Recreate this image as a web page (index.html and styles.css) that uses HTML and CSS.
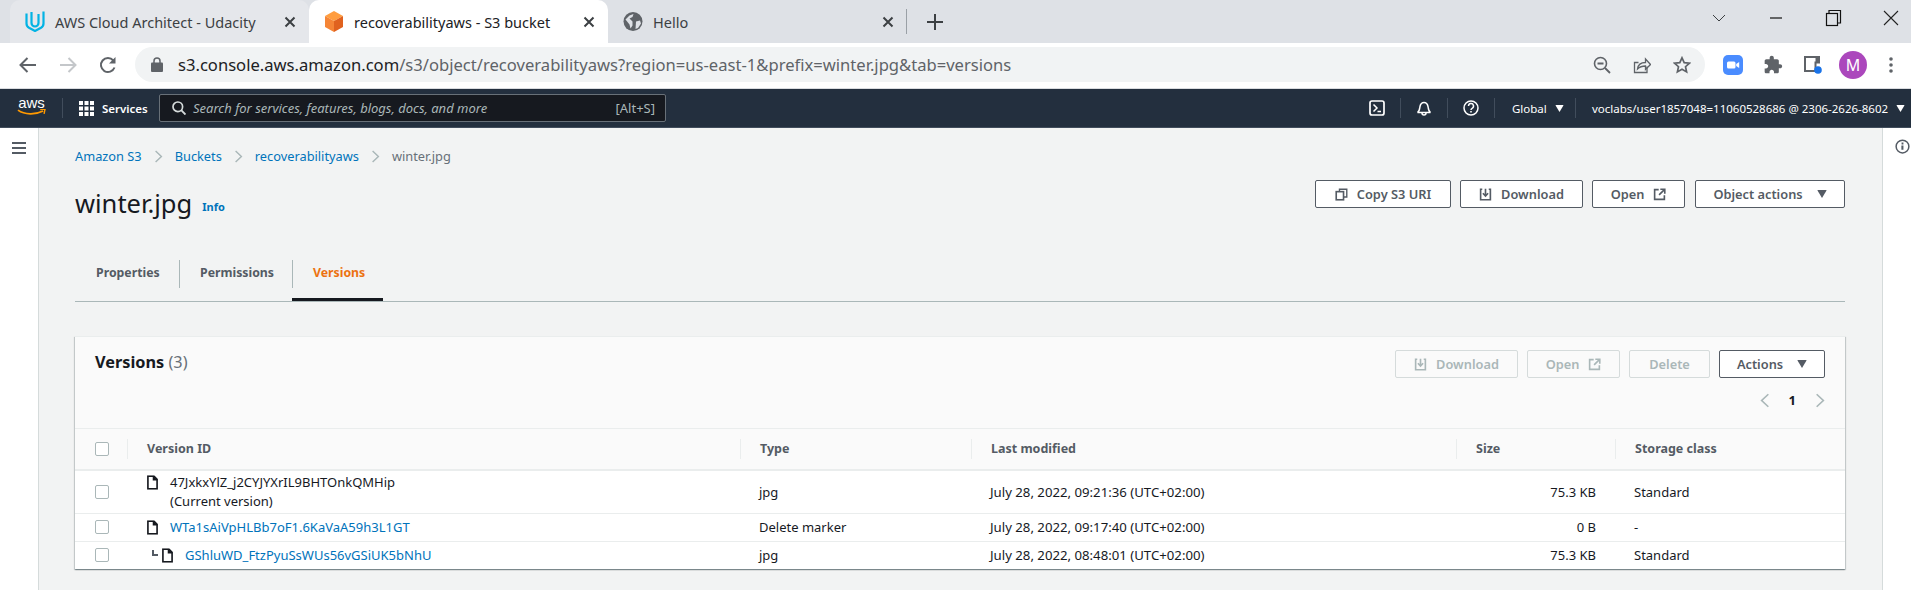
FILE: index.html
```html
<!DOCTYPE html>
<html lang="en">
<head>
  <meta charset="UTF-8" />
  <title>recoverabilityaws - S3 bucket</title>
  <link rel="stylesheet" href="styles.css">
</head>
<body>
  <svg class="defs" width="0" height="0">
    <symbol id="i-download" viewBox="0 0 16 16"><path d="M4 1.5H2v13h12v-13h-2" fill="none" stroke="currentColor" stroke-width="2"/><path d="M8 1v8M4.8 6.5 8 10l3.2-3.5" fill="none" stroke="currentColor" stroke-width="2"/></symbol>
    <symbol id="i-open" viewBox="0 0 16 16"><path d="M7 2H2v12h12V9" fill="none" stroke="currentColor" stroke-width="2"/><path d="M9 1.5h5.5V7M14 2 7.5 8.5" fill="none" stroke="currentColor" stroke-width="2"/></symbol>
    <symbol id="i-copy" viewBox="0 0 16 16"><path d="M5.5 4V1.500h9V11H11" fill="none" stroke="currentColor" stroke-width="1.700"/><rect x="1.500" y="4.500" width="9" height="10" fill="none" stroke="currentColor" stroke-width="2"/></symbol>
    <symbol id="i-caret" viewBox="0 0 12 10"><path d="M0 0h12L6 10z" fill="currentColor"/></symbol>
    <symbol id="i-chev" viewBox="0 0 12 18"><path d="M2 1.500 10 9l-8 7.500" fill="none" stroke="currentColor" stroke-width="2"/></symbol>
    <symbol id="i-file" viewBox="0 0 12 16"><path d="M1 1h6.500L11 4.500V15H1z" fill="none" stroke="#16191f" stroke-width="1.800"/><path d="M7 1v4h4" fill="#16191f" stroke="#16191f" stroke-width="1.500"/></symbol>
  </svg>

  <div class="tabstrip">
    <div class="tab tab-hover">
      <svg class="favicon" viewBox="0 0 20 21"><path d="M1.500 2.500v10a5 5 0 0 0 2.500 4.300l6 3.200 6-3.200a5 5 0 0 0 2.500-4.300V.5" fill="none" stroke="#02b3e4" stroke-width="2.200"/><path d="M6.500 1v11a3.500 3.500 0 0 0 7 0V3" fill="none" stroke="#02b3e4" stroke-width="2.200"/></svg>
      <span class="tab-title">AWS Cloud Architect - Udacity</span>
      <svg class="tab-close" viewBox="0 0 12 12"><path d="M1.500 1.500l9 9M10.500 1.500l-9 9" stroke="#3c4043" stroke-width="2"/></svg>
    </div>
    <div class="tab tab-active">
      <svg class="favicon" viewBox="0 0 20 21"><path d="M10 0l9 5-9 5-9-5z" fill="#ff9d3f"/><path d="M1 5l9 5v11l-9-5z" fill="#f58536"/><path d="M19 5l-9 5v11l9-5z" fill="#e0621f"/></svg>
      <span class="tab-title">recoverabilityaws - S3 bucket</span>
      <svg class="tab-close" viewBox="0 0 12 12"><path d="M1.500 1.500l9 9M10.500 1.500l-9 9" stroke="#3c4043" stroke-width="2"/></svg>
    </div>
    <div class="tab">
      <svg class="favicon" viewBox="0 0 20 20"><circle cx="10" cy="10" r="9.500" fill="#5f6368"/><path d="M2.500 8l4-4 4-1.500-1 3-3 1.500 3 3v4l-2 3-1-4zM13 10l4-1 1 3-3 4.500-2.500 1z" fill="#dee1e6"/></svg>
      <span class="tab-title">Hello</span>
      <svg class="tab-close" viewBox="0 0 12 12"><path d="M1.500 1.500l9 9M10.500 1.500l-9 9" stroke="#3c4043" stroke-width="2"/></svg>
    </div>
    <span class="tab-sep"></span>
    <svg class="new-tab" viewBox="0 0 16 16"><path d="M8 0v16M0 8h16" stroke="#3c4043" stroke-width="2"/></svg>
    <div class="win-controls">
      <svg viewBox="0 0 20 20"><path d="M4 7l6 6 6-6" fill="none" stroke="#3c4043" stroke-width="1"/></svg>
      <svg viewBox="0 0 20 20"><path d="M0 10h12" transform="translate(4 0)" stroke="#111" stroke-width="1.200"/></svg>
      <svg viewBox="0 0 20 20"><rect x="2.500" y="5.500" width="11" height="12" fill="none" stroke="#111" stroke-width="1.200"/><path d="M5 5V2.500h11.500V15H14" fill="none" stroke="#111" stroke-width="1.200"/></svg>
      <svg viewBox="0 0 20 20"><path d="M3 3l14 14M17 3 3 17" stroke="#222" stroke-width="1.100"/></svg>
    </div>
  </div>

  <div class="toolbar">
    <span class="tool-btn"><svg viewBox="0 0 18 18"><path d="M17 9H2M8.500 2 1.500 9l7 7" fill="none" stroke="#5f6368" stroke-width="2"/></svg></span>
    <span class="tool-btn"><svg viewBox="0 0 18 18"><path d="M1 9h15M9.500 2l7 7-7 7" fill="none" stroke="#c4c7ca" stroke-width="2"/></svg></span>
    <span class="tool-btn"><svg viewBox="0 0 18 18"><path d="M15.500 11.500a7 7 0 1 1-1.200-7" fill="none" stroke="#5f6368" stroke-width="2"/><path d="M16.500 1v6.500H10z" fill="#5f6368"/></svg></span>
    <div class="omnibox">
      <svg class="lock" viewBox="0 0 12 15"><path d="M3 6V4a3 3 0 0 1 6 0v2" fill="none" stroke="#5f6368" stroke-width="1.500"/><rect y="5.500" width="12" height="9.500" rx="1" fill="#5f6368"/></svg>
      <span class="url"><span class="url-host">s3.console.aws.amazon.com</span>/s3/object/recoverabilityaws?region=us-east-1&amp;prefix=winter.jpg&amp;tab=versions</span>
      <div class="omni-icons">
        <span class="tool-btn"><svg viewBox="0 0 18 18"><circle cx="7.500" cy="7.500" r="6" fill="none" stroke="#5f6368" stroke-width="1.600"/><path d="M4.500 7.500h6M12 12l5 5" stroke="#5f6368" stroke-width="1.800"/></svg></span>
        <span class="tool-btn"><svg viewBox="0 0 18 18"><path d="M14 10.500V16.500H1.500v-10h4" fill="none" stroke="#5f6368" stroke-width="1.300"/><path d="M4.500 13c.5-4 3.500-6.500 8-6.500V3l5 5.500-5 5v-3.500c-3.500 0-6 1-8 3z" fill="none" stroke="#5f6368" stroke-width="1.300"/></svg></span>
        <span class="tool-btn"><svg viewBox="0 0 18 18"><path d="M9 1.800l2.200 4.800 5.200.6-3.900 3.500 1.100 5.200L9 13.300l-4.600 2.600 1.100-5.200L1.600 7.200l5.200-.6z" fill="none" stroke="#5f6368" stroke-width="1.700"/></svg></span>
      </div>
    </div>
    <div class="ext-icons">
      <span class="tool-btn"><svg class="ext-zoom" viewBox="0 0 20 20"><rect width="20" height="20" rx="5" fill="#4a8cff"/><rect x="4" y="6.500" width="8.500" height="7" rx="1.500" fill="#fff"/><path d="M13.200 9l3-2v6l-3-2z" fill="#fff"/></svg></span>
      <span class="tool-btn"><svg class="ext-puzzle" viewBox="0 0 24 24"><path d="M20.500 11H19V7c0-1.100-.9-2-2-2h-4V3.500C13 2.120 11.880 1 10.500 1S8 2.120 8 3.500V5H4c-1.100 0-1.990.9-1.990 2v3.800H3.500c1.490 0 2.700 1.210 2.700 2.700s-1.210 2.700-2.700 2.700H2V20c0 1.100.9 2 2 2h3.800v-1.500c0-1.490 1.210-2.700 2.700-2.700 1.490 0 2.700 1.210 2.700 2.700V22H17c1.100 0 2-.9 2-2v-4h1.500c1.380 0 2.500-1.120 2.500-2.500S21.880 11 20.500 11z" fill="#5f6368"/></svg></span>
      <span class="tool-btn"><svg class="ext-panel" viewBox="0 0 18 18"><path d="M1 1h14v5.500h-3.500V15H1z" fill="none" stroke="#5f6368" stroke-width="2"/><path d="M11.500 1h3.500v6h-3.500z" fill="#5f6368"/><circle cx="14" cy="14" r="3.800" fill="#1a73e8"/></svg></span>
      <span class="tool-btn"><span class="avatar">M</span></span>
      <span class="tool-btn tool-dots"><svg viewBox="0 0 4 16"><circle cx="2" cy="2" r="1.800" fill="#5f6368"/><circle cx="2" cy="8" r="1.800" fill="#5f6368"/><circle cx="2" cy="14" r="1.800" fill="#5f6368"/></svg></span>
    </div>
  </div>

  <nav class="topnav">
    <div class="aws-logo">
      <span>aws</span>
      <svg viewBox="0 0 30 8"><path d="M1 1c7 5 18 5 26 1" fill="none" stroke="#f90" stroke-width="1.800"/><path d="M24 .5l5-.5-1 5" fill="none" stroke="#f90" stroke-width="1.500"/></svg>
    </div>
    <span class="nav-rule"></span>
    <svg class="nav-grid" viewBox="0 0 15 15"><path d="M0 0h4v4H0zM5.500 0h4v4h-4zM11 0h4v4h-4zM0 5.500h4v4H0zM5.500 5.500h4v4h-4zM11 5.500h4v4h-4zM0 11h4v4H0zM5.500 11h4v4h-4zM11 11h4v4h-4z" fill="#fff"/></svg>
    <span class="nav-services">Services</span>
    <div class="nav-search">
      <svg viewBox="0 0 14 14"><circle cx="5.800" cy="5.800" r="4.800" fill="none" stroke="#d5dbdb" stroke-width="1.700"/><path d="M9.200 9.200 13.500 13.500" stroke="#d5dbdb" stroke-width="1.900"/></svg>
      <span class="search-ph">Search for services, features, blogs, docs, and more</span>
      <span class="search-key">[Alt+S]</span>
    </div>
    <div class="nav-right">
      <span class="nav-cell nav-cell-first"><svg viewBox="0 0 16 16"><rect x="1" y="1" width="14" height="14" rx="2" fill="none" stroke="#fff" stroke-width="1.700"/><path d="M4.500 4.500 8 8l-3.500 3.500M8.500 11.500H12" fill="none" stroke="#fff" stroke-width="1.500"/></svg></span>
      <span class="nav-cell"><svg viewBox="0 0 16 16"><path d="M1.500 12.500c2-1 2-3 2.500-6 .5-2.500 2-4 4-4s3.500 1.500 4 4c.5 3 .5 5 2.500 6z" fill="none" stroke="#fff" stroke-width="1.500"/><path d="M6 13a2 2 0 0 0 4 0" fill="none" stroke="#fff" stroke-width="1.500"/></svg></span>
      <span class="nav-cell"><svg viewBox="0 0 16 16"><circle cx="8" cy="8" r="7" fill="none" stroke="#fff" stroke-width="1.500"/><path d="M5.500 6a2.500 2.500 0 1 1 3.600 2.300C8.300 8.700 8 9.200 8 10" fill="none" stroke="#fff" stroke-width="1.500"/><path d="M7.200 11h1.600v1.600H7.200z" fill="#fff"/></svg></span>
      <span class="nav-cell nav-region">Global <svg viewBox="0 0 12 10"><use href="#i-caret"/></svg></span>
      <span class="nav-cell nav-user">voclabs/user1857048=11060528686 @ 2306-2626-8602 <svg viewBox="0 0 12 10"><use href="#i-caret"/></svg></span>
    </div>
  </nav>

  <div class="console">
    <aside class="side-left">
      <svg viewBox="0 0 14 12"><path d="M0 1h14M0 6h14M0 11h14" stroke="#545b64" stroke-width="2"/></svg>
    </aside>

    <main class="content">
      <div class="crumbs">
        <a>Amazon S3</a>
        <svg viewBox="0 0 12 18"><use href="#i-chev"/></svg>
        <a>Buckets</a>
        <svg viewBox="0 0 12 18"><use href="#i-chev"/></svg>
        <a>recoverabilityaws</a>
        <svg viewBox="0 0 12 18"><use href="#i-chev"/></svg>
        <span>winter.jpg</span>
      </div>

      <div class="page-head">
        <h1>winter.jpg</h1>
        <a class="info">Info</a>
        <div class="btn-row">
          <button class="btn w-copy"><svg class="ic-lead" viewBox="0 0 16 16"><use href="#i-copy"/></svg>Copy S3 URI</button>
          <button class="btn w-download"><svg class="ic-lead" viewBox="0 0 16 16"><use href="#i-download"/></svg>Download</button>
          <button class="btn w-open">Open<svg class="ic-trail" viewBox="0 0 16 16"><use href="#i-open"/></svg></button>
          <button class="btn w-object">Object actions<svg class="caret" viewBox="0 0 12 10"><use href="#i-caret"/></svg></button>
        </div>
      </div>

      <div class="tabs">
        <div class="ptab"><span>Properties</span></div>
        <div class="ptab"><span>Permissions</span></div>
        <div class="ptab ptab-on"><span>Versions</span></div>
      </div>

      <section class="card">
        <div class="card-head">
          <div class="card-top">
            <h2>Versions <span class="count">(3)</span></h2>
            <div class="btn-row">
              <button class="btn btn-off w-download"><svg class="ic-lead" viewBox="0 0 16 16"><use href="#i-download"/></svg>Download</button>
              <button class="btn btn-off w-open">Open<svg class="ic-trail" viewBox="0 0 16 16"><use href="#i-open"/></svg></button>
              <button class="btn btn-off w-delete">Delete</button>
              <button class="btn w-actions">Actions<svg class="caret" viewBox="0 0 12 10"><use href="#i-caret"/></svg></button>
            </div>
          </div>
          <div class="pager">
            <svg class="flip" viewBox="0 0 12 18"><use href="#i-chev"/></svg>
            <span>1</span>
            <svg viewBox="0 0 12 18"><use href="#i-chev"/></svg>
          </div>
        </div>

        <table class="versions">
          <colgroup>
            <col class="c-check"><col class="c-id"><col class="c-type"><col class="c-date"><col class="c-size"><col class="c-class">
          </colgroup>
          <thead>
            <tr>
              <th><span class="check"></span></th>
              <th><span class="th-in">Version ID</span></th>
              <th><span class="th-in">Type</span></th>
              <th><span class="th-in">Last modified</span></th>
              <th><span class="th-in">Size</span></th>
              <th><span class="th-in">Storage class</span></th>
            </tr>
          </thead>
          <tbody>
            <tr class="row-tall">
              <td><span class="check"></span></td>
              <td>
                <div class="vid vid-top">
                  <svg viewBox="0 0 12 16"><use href="#i-file"/></svg>
                  <div>47JxkxYlZ_j2CYJYXrIL9BHTOnkQMHip<br>(Current version)</div>
                </div>
              </td>
              <td class="cell">jpg</td>
              <td class="cell date">July 28, 2022, 09:21:36 (UTC+02:00)</td>
              <td class="cell num">75.3 KB</td>
              <td class="cell">Standard</td>
            </tr>
            <tr>
              <td><span class="check"></span></td>
              <td>
                <div class="vid">
                  <svg viewBox="0 0 12 16"><use href="#i-file"/></svg>
                  <a>WTa1sAiVpHLBb7oF1.6KaVaA59h3L1GT</a>
                </div>
              </td>
              <td class="cell">Delete marker</td>
              <td class="cell date">July 28, 2022, 09:17:40 (UTC+02:00)</td>
              <td class="cell num">0 B</td>
              <td class="cell">-</td>
            </tr>
            <tr>
              <td><span class="check"></span></td>
              <td>
                <div class="vid vid-child">
                  <span class="elbow"></span>
                  <svg viewBox="0 0 12 16"><use href="#i-file"/></svg>
                  <a>GShluWD_FtzPyuSsWUs56vGSiUK5bNhU</a>
                </div>
              </td>
              <td class="cell">jpg</td>
              <td class="cell date">July 28, 2022, 08:48:01 (UTC+02:00)</td>
              <td class="cell num">75.3 KB</td>
              <td class="cell">Standard</td>
            </tr>
          </tbody>
        </table>
      </section>
    </main>

    <aside class="side-right">
      <svg viewBox="0 0 16 16"><circle cx="8" cy="8" r="6.800" fill="none" stroke="#545b64" stroke-width="1.600"/><path d="M6.800 7h2.200v4.500H6.800zM7 3.800h2v2H7z" fill="#545b64"/></svg>
    </aside>
  </div>
</body>
</html>
```

FILE: styles.css
```css
* {
  box-sizing: border-box;
}
html, body {
  margin: 0;
  height: 590px;
  overflow: hidden;
}
body {
  font-family: "Noto Sans", sans-serif;
  font-size: 13px;
  color: #16191f;
  background: #f2f3f3;
}
svg {
  display: block;
  flex: none;
}
.defs {
  position: absolute;
}

/* browser chrome */
.tabstrip {
  display: flex;
  align-items: center;
  height: 43px;
  padding-left: 10px;
  background: #dee1e6;
}
.tab {
  display: flex;
  align-items: center;
  width: 299px;
  height: 43px;
  padding: 0 13px 0 15px;
  border-radius: 10px 10px 0 0;
  font-size: 14.500px;
  color: #3c4043;
}
.tab-hover {
  background: #e5e7eb;
}
.tab-active {
  background: #fff;
  color: #202124;
}
.favicon {
  width: 20px;
  height: 21px;
  margin-right: 10px;
}
.tab-title {
  flex: 1;
  white-space: nowrap;
}
.tab-close {
  width: 12px;
  height: 12px;
}
.tab-sep {
  width: 1px;
  height: 25px;
  margin-left: -1px;
  background: #9aa0a6;
}
.new-tab {
  width: 16px;
  height: 16px;
  margin-left: 20px;
}
.win-controls {
  display: flex;
  gap: 37.5px;
  margin-left: auto;
  margin-right: 10px;
  align-self: flex-start;
  margin-top: 8px;
}
.win-controls svg {
  width: 20px;
  height: 20px;
}

.toolbar {
  display: flex;
  align-items: center;
  height: 46px;
  padding: 0 0 2px 8px;
  background: #fff;
  border-bottom: 1px solid #dadce0;
}
.tool-btn {
  display: flex;
  align-items: center;
  justify-content: center;
  width: 40px;
  height: 35px;
}
.tool-btn svg {
  width: 18px;
  height: 18px;
}
.omnibox {
  display: flex;
  align-items: center;
  width: 1570px;
  height: 35px;
  margin-left: 7px;
  padding: 0 3px 0 16px;
  border-radius: 18px;
  background: #f1f3f4;
}
.lock {
  width: 12px !important;
  height: 15px;
  margin-right: 15px;
}
.url {
  font-size: 16.600px;
  color: #5f6368;
  white-space: nowrap;
}
.url-host {
  color: #202124;
}
.omni-icons {
  display: flex;
  margin-left: auto;
}
.ext-icons {
  display: flex;
  margin-left: 8px;
}
.tool-btn .ext-zoom {
  width: 20px;
  height: 20px;
}
.tool-btn .ext-puzzle {
  width: 20px;
  height: 20px;
}
.avatar {
  display: flex;
  align-items: center;
  justify-content: center;
  width: 28px;
  height: 28px;
  border-radius: 50%;
  background: #ab47bc;
  color: #fff;
  font-size: 16px;
}
.tool-dots {
  width: 36px;
}
.tool-dots svg {
  width: 4px;
  height: 16px;
}

/* aws top nav */
.topnav {
  display: flex;
  align-items: center;
  height: 39px;
  padding-left: 18px;
  background: #232f3e;
  border-bottom: 1px solid #414d5c;
  color: #fff;
}
.aws-logo {
  width: 29px;
  margin-left: -1px;
  text-align: center;
}
.aws-logo span {
  display: block;
  margin-top: -3px;
  font: 15px/13px "Liberation Sans", sans-serif;
}
.aws-logo svg {
  width: 29px;
  height: 8px;
}
.nav-rule {
  width: 1px;
  height: 20px;
  margin-left: 16px;
  background: #414d5c;
}
.nav-grid {
  width: 15px;
  height: 15px;
  margin-left: 16px;
}
.nav-services {
  width: 57px;
  margin-left: 8px;
  font-size: 11.500px;
  font-weight: 600;
}
.nav-search {
  display: flex;
  align-items: center;
  width: 507px;
  height: 28px;
  padding: 0 10px 0 12px;
  background: #16191f;
  border: 1px solid #687078;
  border-radius: 2px;
  font-size: 13px;
  color: #aab7b8;
}
.nav-search svg {
  width: 14px;
  height: 14px;
}
.search-ph {
  margin-left: 7px;
  font-style: italic;
}
.search-key {
  margin-left: auto;
}
.nav-right {
  display: flex;
  align-items: center;
  margin-left: auto;
  font-size: 11.500px;
}
.nav-cell {
  display: flex;
  align-items: center;
  justify-content: center;
  width: 47px;
  height: 20px;
  border-left: 1px solid #414d5c;
}
.nav-cell svg {
  width: 16px;
  height: 16px;
}
.nav-cell-first {
  border-left: 0;
}
.nav-region {
  width: 81px;
  justify-content: flex-start;
  padding-left: 17px;
  white-space: pre;
}
.nav-user {
  width: 336px;
  justify-content: flex-start;
  padding-left: 16px;
  white-space: pre;
}
.nav-cell.nav-region svg, .nav-cell.nav-user svg {
  width: 9px;
  height: 7px;
  margin-left: 5px;
}

/* console body */
.console {
  display: flex;
  height: 462px;
}
.side-left {
  width: 39px;
  padding: 14px 0 0 12px;
  background: #fff;
  border-right: 1px solid #d5dbdb;
}
.side-left svg {
  width: 14px;
  height: 12px;
}
.side-right {
  width: 29px;
  padding: 11px 0 0 12px;
  background: #fff;
  border-left: 1px solid #d5dbdb;
}
.side-right svg {
  width: 15px;
  height: 15px;
}
.content {
  flex: 1;
  padding: 18px 37px 0 36px;
  min-width: 0;
}

.crumbs {
  display: flex;
  align-items: center;
  height: 20px;
  color: #687078;
  font-size: 12.800px;
}
.crumbs a {
  color: #0073bb;
}
.crumbs svg {
  width: 9px;
  height: 13px;
  margin: 0 12px;
  color: #aab7b8;
}

.page-head {
  display: flex;
  align-items: flex-start;
  margin-top: 14px;
  height: 43px;
}
.page-head h1 {
  margin: 5px 0 0;
  font-size: 25.500px;
  font-weight: 400;
  line-height: 36px;
}
.info {
  margin: 19px 0 0 10px;
  color: #0073bb;
  font-size: 11px;
  font-weight: 700;
  line-height: 16px;
}
.btn-row {
  display: flex;
  gap: 9px;
  margin-left: auto;
}
.btn {
  display: flex;
  align-items: center;
  justify-content: center;
  height: 28px;
  padding: 0;
  background: #fff;
  border: 1px solid #545b64;
  border-radius: 2px;
  color: #545b64;
  font-family: inherit;
  font-size: 12.800px;
  font-weight: 600;
}
.btn .ic-lead {
  width: 13px;
  height: 13px;
  margin-right: 9px;
}
.btn .ic-trail {
  width: 13px;
  height: 13px;
  margin-left: 9px;
}
.btn .caret {
  width: 10px;
  height: 8px;
  margin-left: 14px;
}
.w-copy { width: 136px; }
.w-download { width: 123px; }
.w-open { width: 93px; }
.w-object { width: 150px; }
.w-delete { width: 81px; }
.w-actions { width: 106px; }
.page-head .w-object {
  margin-left: 1px;
}
.btn-off {
  background: transparent;
  border-color: #d5dbdb;
  color: #aab7b8;
}

.tabs {
  display: grid;
  grid-template-columns: 104px 113px 91px;
  height: 51px;
  margin-top: 28px;
  border-bottom: 1px solid #aab7b8;
}
.ptab {
  height: 50px;
  padding-top: 9px;
  color: #545b64;
  font-weight: 700;
  font-size: 12.300px;
}
.ptab span {
  display: block;
  height: 28px;
  line-height: 26px;
  padding-left: 20px;
  border-left: 1px solid #aab7b8;
}
.ptab:first-child span {
  padding-left: 21px;
  border-left: 0;
}
.ptab-on {
  border-bottom: 3px solid #16191f;
  color: #ec7211;
}

.card {
  margin-top: 34px;
  background: #fff;
  box-shadow: 0 1px 1px 0 rgba(0, 28, 36, 0.3), 1px 1px 1px 0 rgba(0, 28, 36, 0.15), -1px 1px 1px 0 rgba(0, 28, 36, 0.15);
}
.card-head {
  height: 93px;
  padding: 13px 20px 0;
  background: #fafafa;
  border-top: 1px solid #eaeded;
  border-bottom: 1px solid #eaeded;
}
.card-top {
  display: flex;
  align-items: flex-start;
}
.card-top h2 {
  margin: -1px 0 0;
  font-size: 16.300px;
  font-weight: 700;
  line-height: 26px;
  color: #16191f;
}
.count {
  font-weight: 400;
  color: #687078;
}
.pager {
  display: flex;
  align-items: center;
  justify-content: flex-end;
  gap: 19px;
  height: 24px;
  margin-top: 10px;
  font-weight: 700;
  font-size: 13px;
}
.pager svg {
  width: 10px;
  height: 15px;
  color: #aab7b8;
}
.pager .flip {
  transform: scaleX(-1);
}

.versions {
  width: 100%;
  table-layout: fixed;
  border-collapse: collapse;
}
.c-check { width: 52px; }
.c-id { width: 613px; }
.c-type { width: 231px; }
.c-date { width: 485px; }
.c-size { width: 159px; }
.c-class { width: 230px; }
.versions th {
  height: 41px;
  padding: 0;
  background: #fafafa;
  border-bottom: 2px solid #eaeded;
  text-align: left;
  color: #545b64;
  font-size: 12.500px;
  font-weight: 700;
}
.th-in {
  display: block;
  height: 20px;
  line-height: 20px;
  padding-left: 19px;
  border-left: 1px solid #eaeded;
}
.versions td {
  height: 28px;
  padding: 0;
  border-bottom: 1px solid #eaeded;
  vertical-align: middle;
}
.row-tall td {
  height: 43px;
}
.versions tr:last-child td {
  border-bottom: 0;
}
.check {
  display: block;
  width: 14px;
  height: 14px;
  margin-left: 20px;
  background: #fff;
  border: 1px solid #aab7b8;
  border-radius: 2px;
}
.versions .cell {
  padding-left: 19px;
}
.versions .date {
  font-size: 13.200px;
}
.versions .num {
  padding: 0 19px 0 0;
  text-align: right;
}
.vid {
  display: flex;
  align-items: center;
  gap: 12px;
  padding-left: 20px;
  line-height: 19px;
}
.vid a {
  color: #0073bb;
}
.vid svg {
  width: 11px;
  height: 15px;
}
.vid-top {
  align-items: flex-start;
}
.vid-top svg {
  margin-top: 2px;
}
.vid-child {
  padding-left: 25px;
}
.elbow {
  width: 6px;
  height: 6px;
  margin: -5px -8px 0 0;
  border-left: 2px solid #545b64;
  border-bottom: 2px solid #545b64;
}
```
